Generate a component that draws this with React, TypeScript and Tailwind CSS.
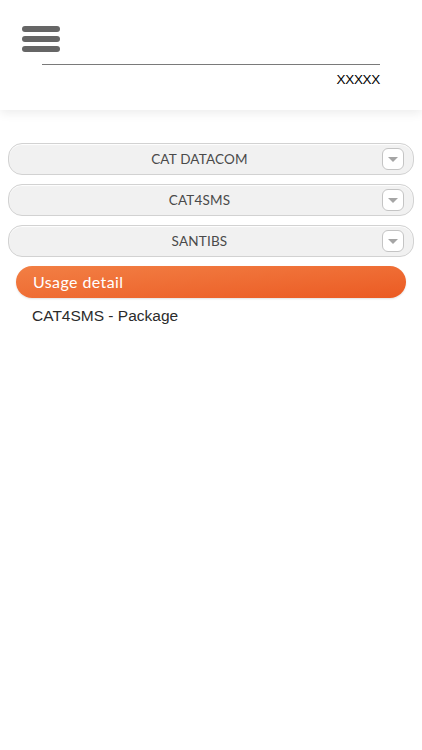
import { useState } from 'react';

const accounts = ['CAT DATACOM', 'CAT4SMS', 'SANTIBS'];

const Dropdown = ({ label }: { label: string }) => (
    <div className="relative h-[32px] rounded-[14px] border border-[#d2d2d2] bg-[#f1f1f1] flex items-center justify-center pr-[23px] shadow-[inset_0_1px_1px_rgba(255,255,255,0.9)]">
        <span className="text-[13.5px] text-[#4a4a4a] tracking-[0.2px]" style={{ fontFamily: 'Lato, "Open Sans", sans-serif' }}>
            {label}
        </span>
        <div className="absolute right-[9px] top-[4px] w-[22px] h-[22px] rounded-[6px] border border-[#c4c4c4] bg-white flex items-center justify-center">
            <div className="w-0 h-0 border-l-[5px] border-r-[5px] border-t-[5px] border-l-transparent border-r-transparent border-t-[#a5a5a5] mt-[1px]" />
        </div>
    </div>
);

export default function App() {
    const [open] = useState(true);

    return (
        <div className="w-[422px] h-[750px] bg-white overflow-hidden" style={{ fontFamily: '"Liberation Sans", Arial, sans-serif' }}>
            {/* Header */}
            <div className="h-[110px] bg-white relative z-10 shadow-[0_3px_10px_rgba(0,0,0,0.08)]">
                <div className="pl-[22px] pt-[26px] flex flex-col gap-[4px] w-fit">
                    <div className="w-[38px] h-[6px] rounded-full bg-[#666]" />
                    <div className="w-[38px] h-[6px] rounded-full bg-[#666]" />
                    <div className="w-[38px] h-[6px] rounded-full bg-[#666]" />
                </div>
                <div className="ml-[42px] mr-[42px] mt-[12px] border-t border-[#7a7a7a]" />
                <div className="mr-[42px] mt-[6px] text-right text-[13.5px] text-black leading-[17px] tracking-[-0.3px]">XXXXX</div>
            </div>

            {/* Account list */}
            <div className="pt-[33px] px-[8px] flex flex-col gap-[9px]">
                {accounts.map(a => (
                    <Dropdown key={a} label={a} />
                ))}
            </div>

            {open && (
                <div className="px-[16px] pt-[9px]">
                    <div className="h-[32px] rounded-full bg-gradient-to-br from-[#f27f44] to-[#eb5a22] flex items-center pl-[17px] shadow-[0_1px_2px_rgba(0,0,0,0.12)]">
                        <span className="text-white text-[16px] tracking-[0.4px]" style={{ fontFamily: 'Lato, "Open Sans", sans-serif' }}>Usage detail</span>
                    </div>
                    <div className="pl-[16px] pt-[6px] text-[15.5px] text-[#2b2b2b]">CAT4SMS - Package</div>
                </div>
            )}
        </div>
    );
}
